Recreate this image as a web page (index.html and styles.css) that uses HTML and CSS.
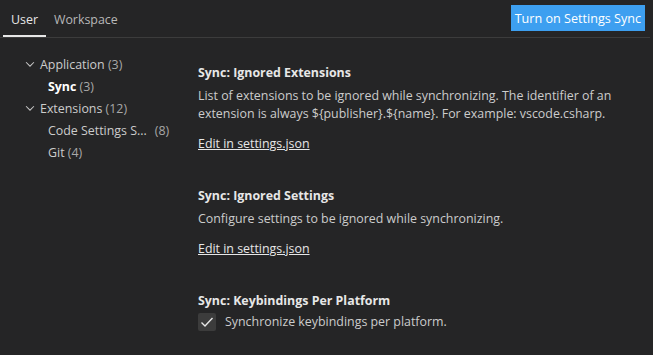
FILE: index.html
```html
<!DOCTYPE html>
<html lang="en">
  <head>
    <meta charset="UTF-8" />
    <title>Settings</title>
    <link rel="stylesheet" href="styles.css">
  </head>
  <body>
    <div class="header">
      <div class="tabs">
        <div class="tab active">User</div>
        <div class="tab">Workspace</div>
      </div>
      <button class="sync-btn">Turn on Settings Sync</button>
    </div>

    <div class="main">
      <div class="tree">
        <div class="node">
          <svg class="chev" viewBox="0 0 16 16"><path d="M3.5 6l4.5 4.5L12.5 6" /></svg>
          <span>Application <span class="count">(3)</span></span>
        </div>
        <div class="node child selected"><span>Sync <span class="count">(3)</span></span></div>
        <div class="node">
          <svg class="chev" viewBox="0 0 16 16"><path d="M3.5 6l4.5 4.5L12.5 6" /></svg>
          <span>Extensions <span class="count">(12)</span></span>
        </div>
        <div class="node child"><span class="trunc">Code Settings S...</span><span class="count">(8)</span></div>
        <div class="node child"><span>Git <span class="count">(4)</span></span></div>
      </div>

      <div class="settings">
        <!-- ignored extensions -->
        <div class="setting">
          <div class="title">Sync: Ignored Extensions</div>
          <div class="desc">List of extensions to be ignored while synchronizing. The identifier of an extension is always ${publisher}.${name}. For example: vscode.csharp.</div>
          <a class="edit">Edit in settings.json</a>
        </div>

        <!-- ignored settings -->
        <div class="setting">
          <div class="title">Sync: Ignored Settings</div>
          <div class="desc">Configure settings to be ignored while synchronizing.</div>
          <a class="edit">Edit in settings.json</a>
        </div>

        <!-- keybindings -->
        <div class="setting">
          <div class="title">Sync: Keybindings Per Platform</div>
          <div class="check-row">
            <span class="checkbox">
              <svg viewBox="0 0 16 16"><path d="M2.5 8.5l3.5 3.5 7.5-8" /></svg>
            </span>
            <span class="desc">Synchronize keybindings per platform.</span>
          </div>
        </div>
      </div>
    </div>
  </body>
</html>
```

FILE: styles.css
```css
html,
body {
  margin: 0;
  padding: 0;
  background-color: #252526;
  color: #cccccc;
  font-family: "Open Sans", "Noto Sans", sans-serif;
  font-size: 12.4px;
}

.header {
  display: flex;
  justify-content: space-between;
  align-items: flex-start;
  height: 37px;
  border-bottom: 1px solid #3c3c3c;
  margin-right: 3px;
}

.tabs {
  display: flex;
  padding-left: 3px;
  height: 37px;
}

.tab {
  padding: 0 8px;
  line-height: 40px;
  height: 37px;
  box-sizing: border-box;
  color: #b8b8b8;
}

.tab.active {
  color: #e7e7e7;
  border-bottom: 2px solid #e7e7e7;
}

.sync-btn {
  margin-top: 5px;
  margin-right: 5px;
  height: 26px;
  padding: 0 4px;
  border: none;
  background-color: #3d9ff0;
  color: #ffffff;
  font-family: inherit;
  font-size: 12.6px;
}

.main {
  display: flex;
  padding-top: 15px;
}

.tree {
  width: 198px;
  flex-shrink: 0;
}

.node {
  display: flex;
  align-items: center;
  height: 22px;
  padding-left: 23px;
  color: #cccccc;
}

.node.child {
  padding-left: 48px;
}

.node.selected {
  font-weight: bold;
  color: #ffffff;
}

.count {
  font-weight: normal;
  color: #a8a8a8;
}

.trunc {
  margin-right: 8px;
}

.chev {
  width: 14px;
  height: 14px;
  margin-right: 3px;
  fill: none;
  stroke: #c5c5c5;
  stroke-width: 1.2;
}

.settings {
  padding-top: 11px;
}

.setting {
  padding-bottom: 34px;
}

.title {
  font-weight: bold;
  color: #e7e7e7;
  line-height: 18px;
  margin-bottom: 5px;
}

.desc {
  line-height: 18px;
  width: 430px;
}

.edit {
  display: inline-block;
  margin-top: 12px;
  text-decoration: underline;
  color: #e7e7e7;
  line-height: 18px;
}

.check-row {
  display: flex;
  align-items: center;
  gap: 9px;
  margin-top: -2px;
}

.checkbox {
  width: 18px;
  height: 18px;
  background-color: #3c3c3c;
  border-radius: 2px;
  display: flex;
  align-items: center;
  justify-content: center;
}

.checkbox svg {
  width: 16px;
  height: 16px;
  fill: none;
  stroke: #e7e7e7;
  stroke-width: 1.4;
}

.check-row .desc {
  width: auto;
}
```
